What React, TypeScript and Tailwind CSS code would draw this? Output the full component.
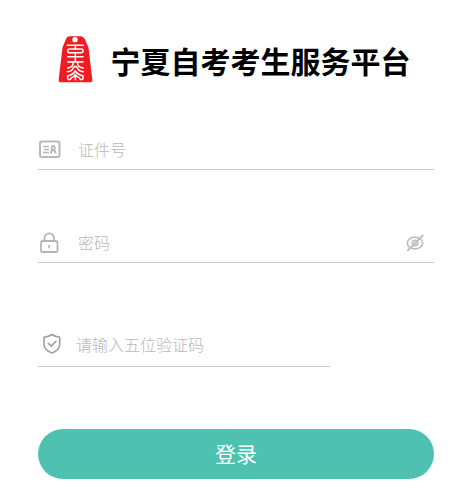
import { useState } from "react";
import type { ReactNode } from "react";

const INPUT_CLASS =
  "min-w-0 flex-1 bg-transparent text-base font-light text-[#333333] outline-none placeholder:text-[#b8b8b8]";

export default function App() {
  const [idNumber, setIdNumber] = useState("");
  const [password, setPassword] = useState("");
  const [captcha, setCaptcha] = useState("");
  const [visible, setVisible] = useState(false);

  return (
    <main className="bg-white pt-9 pr-[42px] pb-3 pl-[38px] font-['Noto_Sans_CJK_SC',sans-serif]">
      <header className="flex items-center justify-center gap-[18px] pr-1">
        <Logo />
        <h1 className="text-[30px] leading-[48px] font-bold whitespace-nowrap text-black">
          宁夏自考考生服务平台
        </h1>
      </header>

      <form className="mt-[45px] flex flex-col" onSubmit={(e) => e.preventDefault()}>
        <Field icon={<IdCardIcon />}>
          <input
            type="text"
            aria-label="证件号"
            placeholder="证件号"
            value={idNumber}
            onChange={(e) => setIdNumber(e.target.value)}
            className={INPUT_CLASS}
          />
        </Field>

        <div className="mt-[52px]">
          <Field icon={<LockIcon />}>
            <input
              type={visible ? "text" : "password"}
              aria-label="密码"
              placeholder="密码"
              value={password}
              onChange={(e) => setPassword(e.target.value)}
              className={INPUT_CLASS}
            />
            <button
              type="button"
              aria-label="显示密码"
              aria-pressed={visible}
              onClick={() => setVisible(!visible)}
              className="mr-[9px] cursor-pointer"
            >
              <EyeOffIcon />
            </button>
          </Field>
        </div>

        <div className="mt-[58px] w-[292px] max-w-full">
          <div className="flex h-[46px] items-center gap-3 border-b border-[#cccccc] pl-1">
            <ShieldIcon />
            <input
              type="text"
              aria-label="请输入五位验证码"
              placeholder="请输入五位验证码"
              maxLength={5}
              value={captcha}
              onChange={(e) => setCaptcha(e.target.value)}
              className={INPUT_CLASS}
            />
          </div>
        </div>

        <button
          type="submit"
          className="mt-[62px] h-[50px] w-full cursor-pointer rounded-full bg-[#4fc1b1] text-[21px] text-white"
        >
          登录
        </button>
      </form>
    </main>
  );
}

/* ---- Sub-components ---- */

function Field({ icon, children }: { icon: ReactNode; children: ReactNode }) {
  return (
    <div className="flex h-[41px] items-center gap-4 border-b border-[#cccccc]">
      {icon}
      {children}
    </div>
  );
}

/* ---- Icons ---- */

function Logo() {
  return (
    <svg width="35" height="48" viewBox="0 0 105 144" fill="none" className="shrink-0" aria-hidden="true">
      <path
        d="M34 1h34q8 0 12 8l8 17q3 6 4 12l11 93q1 8-7 8H9q-8 0-7-8l11-93q1-6 4-12l7-17q3-8 10-8z"
        fill="#ee1c25"
      />
      <circle cx="51" cy="11" r="8" fill="#fff" />
      <g stroke="#fff" strokeWidth="4.5" strokeLinecap="round" strokeLinejoin="round">
        <path d="M28 28h48M52 28v11M52 39H34q-5 0-5 5.500t5 5.500h18M52 39h18q5 0 5 5.500t-5 5.500H52M52 50v12" />
        <path d="M29 62h46M52 62v16M29 78h46" />
        <path d="M45 79v5q0 9-16 12M59 79v5q0 9 16 12" />
        <path d="M28 107q14-1 18-12 6-7 12 0 4 11 18 12" />
        <path d="M29 119q15-1 23-14 8 13 23 14v6q0 6-5 6t-6-6q-9-2-12-9-3 7-12 9-1 6-6 6t-5-6z" />
        <path d="M52 116v15" />
      </g>
    </svg>
  );
}

function IdCardIcon() {
  return (
    <svg width="24" height="24" viewBox="0 0 24 24" fill="none" stroke="#b9b9b9" className="shrink-0" aria-hidden="true">
      <rect x="2" y="4.5" width="19.5" height="15.5" rx="2" strokeWidth="2" />
      <path d="M5 9.5h6M6 12.5h5M5 15.5h6" strokeWidth="1.5" />
      <path d="M12.7 16.5 14 12.5q-1-3.5 1.2-3.5t1.2 3.5l1.3 4M13.5 13.5h3.5" strokeWidth="1.9" />
    </svg>
  );
}

function LockIcon() {
  return (
    <svg width="24" height="24" viewBox="0 0 24 24" fill="none" stroke="#b5b5b5" strokeWidth="1.8" className="shrink-0" aria-hidden="true">
      <rect x="3" y="11" width="16.5" height="11" rx="1.8" />
      <path d="M6.5 11V8a4.7 4.7 0 0 1 9.4 0v3" />
      <path d="M11.2 14.8v3.5" />
    </svg>
  );
}

function EyeOffIcon() {
  return (
    <svg width="20" height="20" viewBox="0 0 20 20" fill="none" stroke="#bebebe" aria-hidden="true">
      <ellipse cx="10" cy="11" rx="7.7" ry="5.8" strokeWidth="1.7" />
      <circle cx="10" cy="11" r="2.7" strokeWidth="1.7" />
      <path d="M2.8 18.5 17.8 3.5" strokeWidth="1.8" strokeLinecap="round" />
    </svg>
  );
}

function ShieldIcon() {
  return (
    <svg width="22" height="22" viewBox="0 0 22 22" fill="none" stroke="#9a9ea9" strokeWidth="1.6" strokeLinecap="round" strokeLinejoin="round" className="shrink-0" aria-hidden="true">
      <path d="M10 1.5Q13.5 4 17.7 4.3V11q0 6-7.7 9Q2 17 2 11V4.3Q6.5 4 10 1.5z" />
      <path d="m6.3 10.3 3 2.8 4.7-4.8" />
    </svg>
  );
}
